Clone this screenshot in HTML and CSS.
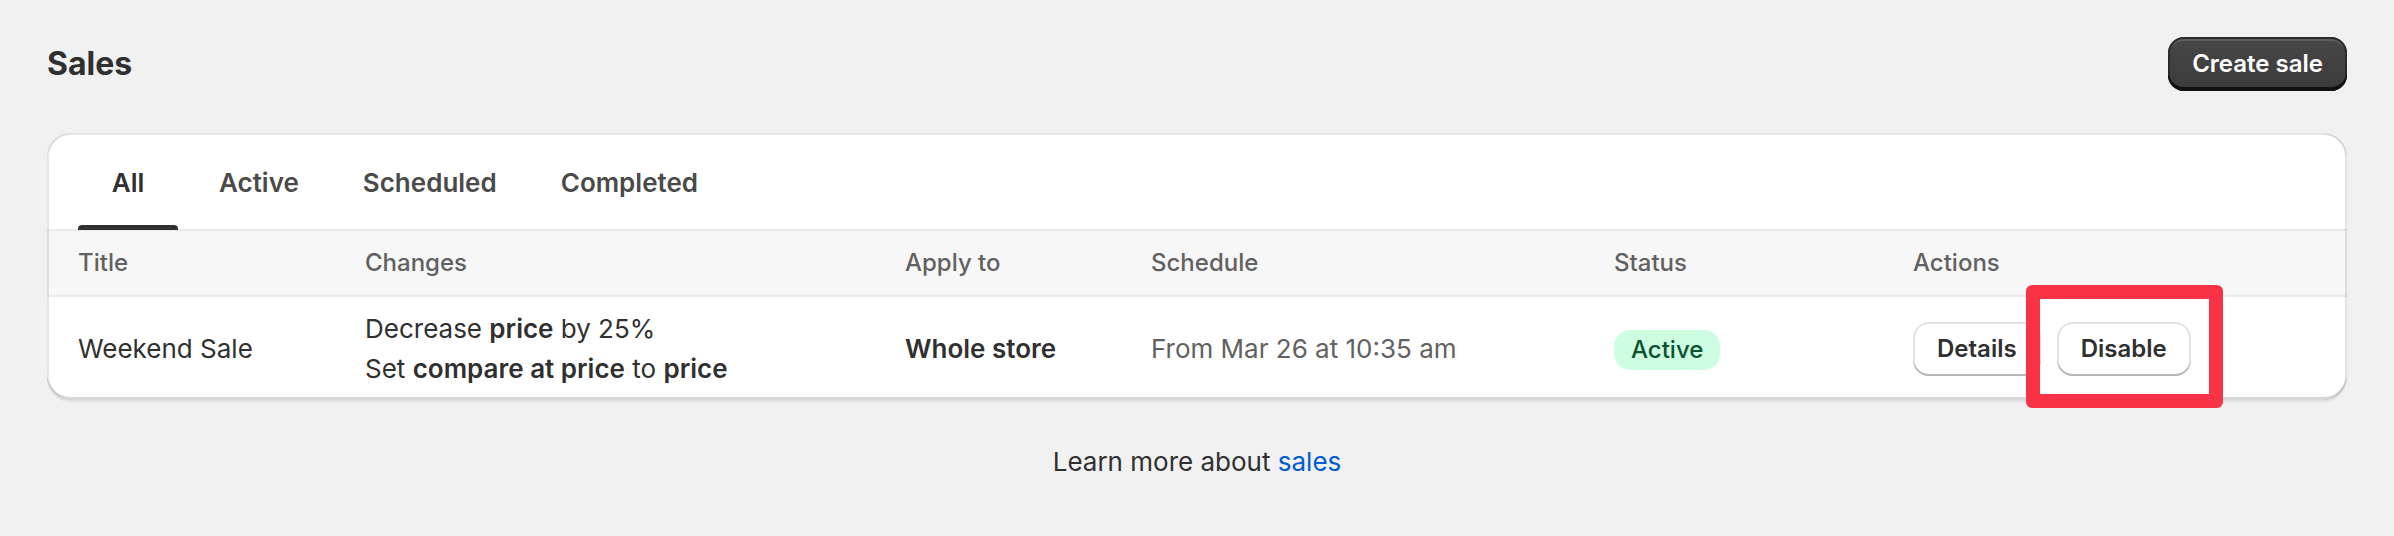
FILE: index.html
```html
<!DOCTYPE html>
<html lang="en">
<head>
    <meta charset="UTF-8">
    <meta name="viewport" content="width=device-width, initial-scale=1.0">
    <title>Sales</title>
    <link rel="stylesheet" href="styles.css">
</head>
<body>

    <div class="pagina">
        <div class="cabecalho">
            <h1 class="titulo">Sales</h1>
            <button class="botao botao-primario">Create sale</button>
        </div>

        <div class="cartao">
            <div class="abas">
                <button class="aba aba-ativa">All</button>
                <button class="aba">Active</button>
                <button class="aba">Scheduled</button>
                <button class="aba">Completed</button>
            </div>

            <div class="linha linha-topo">
                <div>Title</div>
                <div>Changes</div>
                <div>Apply to</div>
                <div>Schedule</div>
                <div>Status</div>
                <div>Actions</div>
            </div>

            <div class="linha linha-corpo">
                <div>Weekend Sale</div>
                <div>
                    <div>Decrease <b>price</b> by 25%</div>
                    <div>Set <b>compare at price</b> to <b>price</b></div>
                </div>
                <div><b>Whole store</b></div>
                <div class="suave">From Mar 26 at 10:35 am</div>
                <div><span class="etiqueta">Active</span></div>
                <div class="acoes">
                    <button class="botao botao-secundario">Details</button>
                    <span class="destaque-alvo">
                        <button class="botao botao-secundario">Disable</button>
                        <span class="destaque"></span>
                    </span>
                </div>
            </div>
        </div>

        <p class="ajuda">Learn more about <a href="#">sales</a></p>
    </div>

</body>
</html>
```

FILE: styles.css
```css
body {
    margin: 0;
    background-color: #f1f1f1;
    font-family: Inter, 'Noto Sans', sans-serif;
    color: #303030;
}
.pagina {
    padding: 37px 47px 0;
}
.cabecalho {
    display: flex;
    justify-content: space-between;
    align-items: center;
}
.titulo {
    margin: 0;
    font-size: 32px;
    font-weight: 700;
    line-height: 48px;
}
.botao {
    font-family: inherit;
    font-size: 24px;
    font-weight: 600;
    line-height: 32px;
    padding: 11px 24px;
    border: none;
    border-radius: 16px;
    cursor: pointer;
}
.botao-primario {
    color: #fff;
    background: linear-gradient(180deg, #474747, #3b3b3b);
    box-shadow: inset 0 -4px 0 #111, inset 0 0 0 2px #2b2b2b, inset 0 4px 0 rgba(255, 255, 255, 0.12);
}
.botao-secundario {
    color: #303030;
    background-color: #fff;
    box-shadow: inset 0 -2px 0 #b5b5b5, inset 0 0 0 2px #e3e3e3;
}
.cartao {
    position: relative;
    margin-top: 42px;
    background-color: #fff;
    border-radius: 24px;
    box-shadow: 0 2px 1px rgba(26, 26, 26, 0.07);
}
.cartao::after {
    content: "";
    position: absolute;
    inset: 0;
    border-radius: inherit;
    box-shadow: inset 2px 0 0 rgba(0, 0, 0, 0.09), inset -2px 0 0 rgba(0, 0, 0, 0.11), inset 0 -3px 0 rgba(0, 0, 0, 0.15), inset 0 2px 0 rgba(204, 204, 204, 0.5);
    pointer-events: none;
    z-index: 1;
}
.abas {
    display: flex;
    gap: 18px;
    padding: 0 31px;
}
.aba {
    position: relative;
    box-sizing: border-box;
    height: 96px;
    min-width: 100px;
    padding: 3px 23px 0;
    display: flex;
    align-items: center;
    justify-content: center;
    border: none;
    background: none;
    font-family: inherit;
    font-size: 26px;
    font-weight: 600;
    color: #4a4a4a;
}
.aba-ativa {
    color: #303030;
}
.aba-ativa::after {
    content: "";
    position: absolute;
    left: 0;
    right: 0;
    bottom: -1px;
    height: 5px;
    background-color: #303030;
    border-radius: 4px 4px 0 0;
}
.linha {
    display: grid;
    grid-template-columns: 287px 540px 246px 463px 299px 1fr;
    align-items: center;
    padding-left: 31px;
}
.linha-topo {
    height: 64px;
    background-color: #f7f7f7;
    border-top: 2px solid #ebebeb;
    border-bottom: 2px solid #ebebeb;
    font-size: 24px;
    font-weight: 500;
    line-height: 32px;
    color: #616161;
}
.linha-corpo {
    padding-top: 12px;
    padding-bottom: 11px;
    font-size: 26px;
    line-height: 40px;
}
.linha-corpo b {
    font-weight: 600;
}
.suave {
    color: #616161;
}
.etiqueta {
    display: inline-block;
    padding: 4px 17px;
    border-radius: 16px;
    background-color: #cdfee1;
    color: #0c5132;
    font-size: 24px;
    font-weight: 450;
    line-height: 32px;
}
.acoes {
    display: flex;
    gap: 16px;
}
.destaque-alvo {
    position: relative;
    display: inline-flex;
}
.destaque {
    position: absolute;
    left: -31px;
    top: -37px;
    width: 197px;
    height: 123px;
    box-sizing: border-box;
    border: 14px solid #f93346;
    border-radius: 6px;
    z-index: 2;
}
.ajuda {
    margin: 42px 0 0;
    text-align: center;
    font-size: 26px;
    line-height: 40px;
}
.ajuda a {
    color: #005bd3;
    text-decoration: none;
}
```
